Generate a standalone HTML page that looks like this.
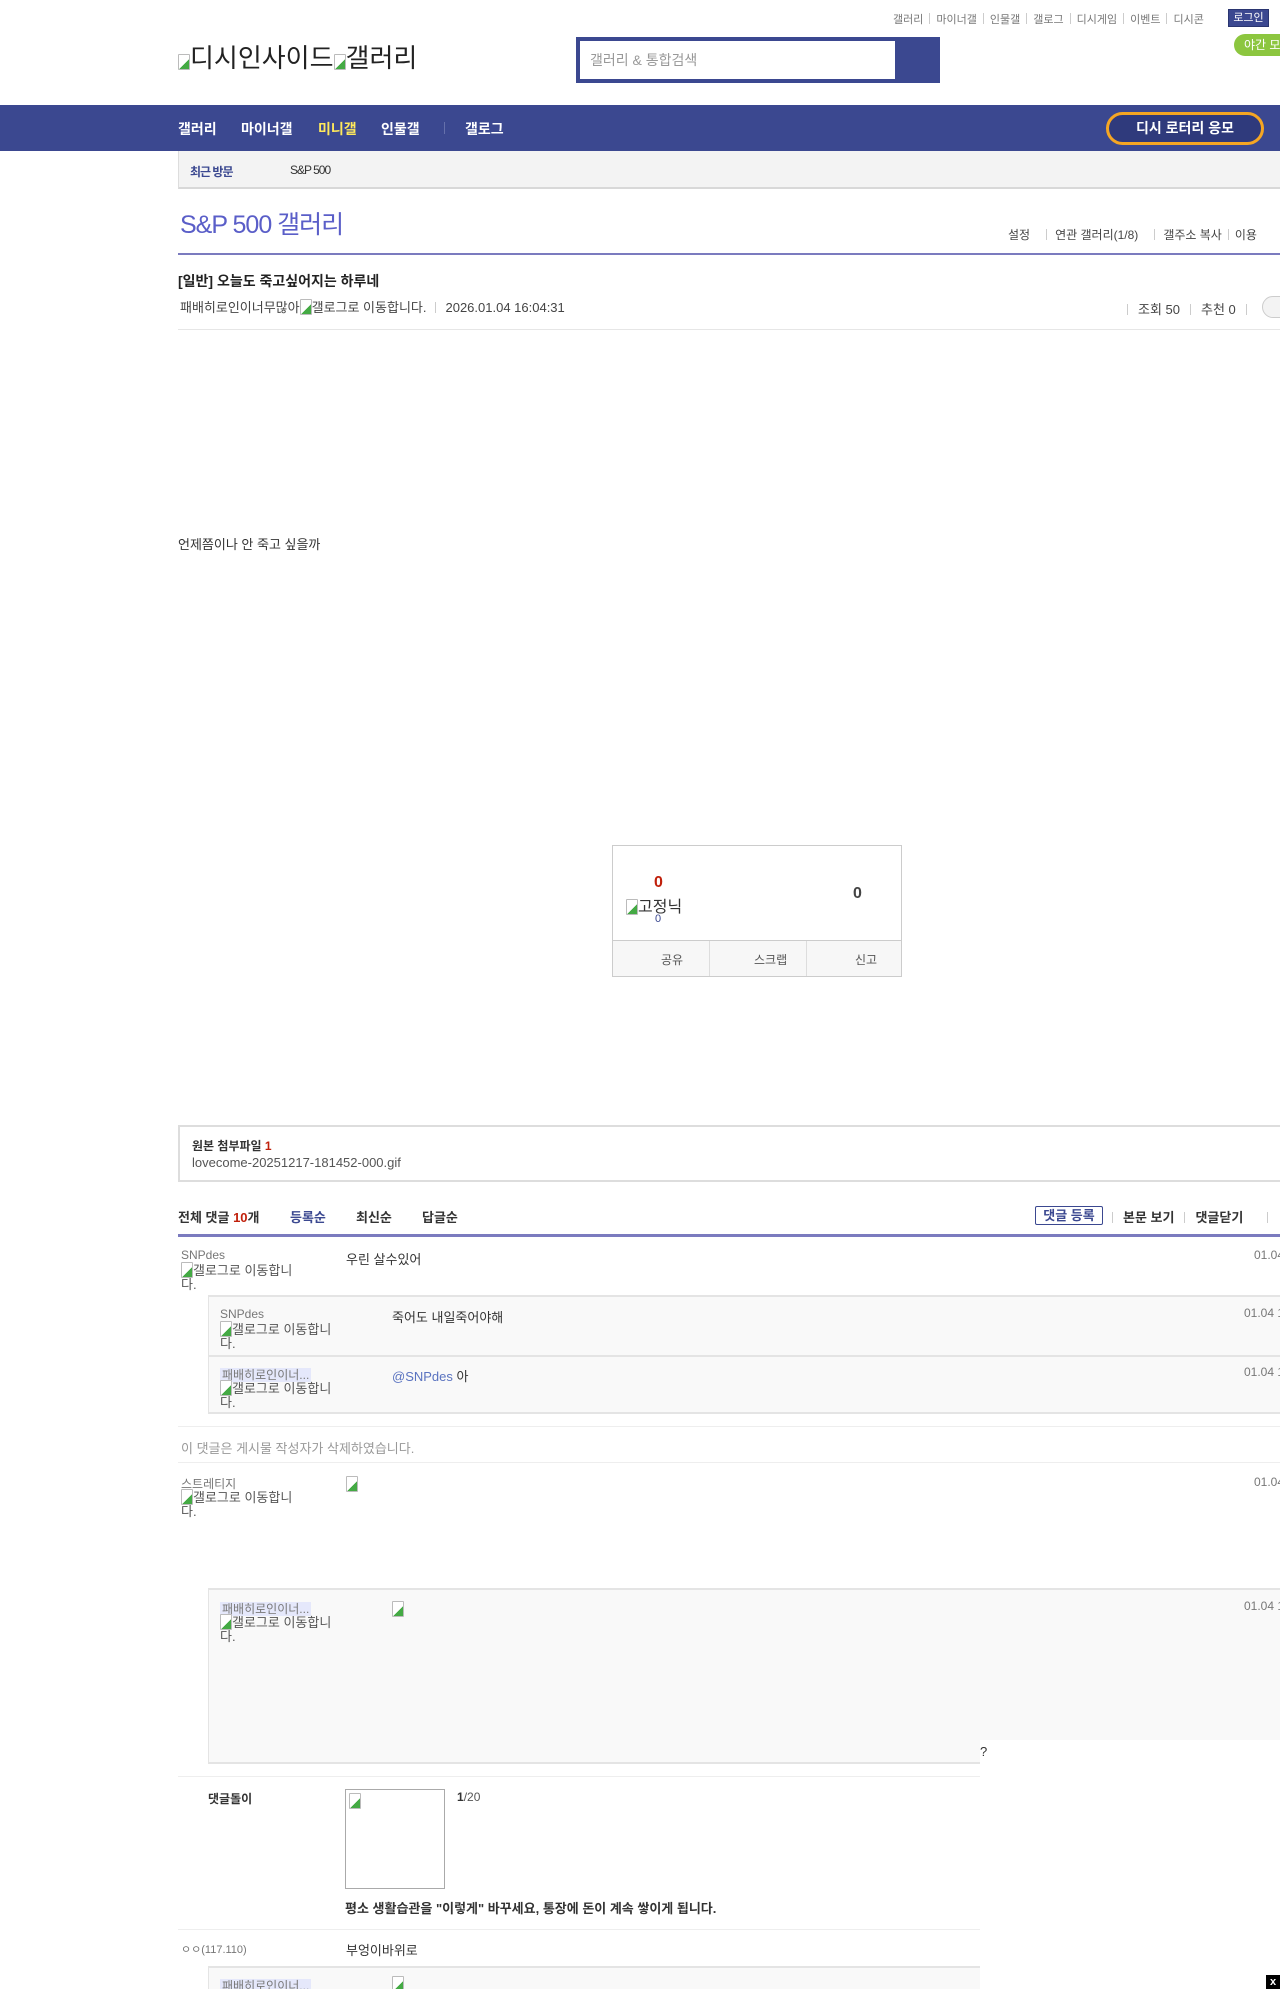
<!DOCTYPE html>
<html><head><meta charset="utf-8"><style>
*{margin:0;padding:0;box-sizing:border-box}
html,body{width:1280px;height:1989px;overflow:hidden;background:#fff}
body{position:relative;font-family:"Liberation Sans","Noto Sans CJK KR",sans-serif;font-size:12px;color:#333}
.a{position:absolute;white-space:nowrap}
.g{color:#777}
.sep{display:inline-block;width:1px;height:11px;background:#ccc;margin:0 6px;vertical-align:-1px}
.brk{display:inline-block;width:12px;height:16px;border:1px solid #bbb;border-radius:1px;vertical-align:-3px;background:linear-gradient(135deg,#fff 60%,#4a4 60%)}
.gallog{font-size:13px;color:#555;line-height:14px;white-space:normal;width:125px}
.rbox{position:absolute;left:208px;background:#f9f9f9;border-top:2px solid #e4e4e4;border-bottom:2px solid #e4e4e4;border-left:1px solid #e4e4e4}
.hl{background:#e5e8fb;color:#777;padding:0 2px}
</style></head><body>
<!-- top links -->
<div class="a g" style="left:893px;top:11px;font-size:11px">갤러리<span class="sep"></span>마이너갤<span class="sep"></span>인물갤<span class="sep"></span>갤로그<span class="sep"></span>디시게임<span class="sep"></span>이벤트<span class="sep"></span>디시콘</div>
<div class="a" style="left:1228px;top:9px;width:41px;height:18px;background:#3b4890;border:1px solid #2a3570;color:#fff;font-size:11px;text-align:center;line-height:16px">로그인</div>
<div class="a" style="left:1234px;top:34px;width:60px;height:22px;background:#8cc63f;border-radius:11px;color:#fff;font-size:12px;line-height:22px;padding-left:10px">야간 모드</div>
<div class="a" style="left:178px;top:38px;font-size:26px;color:#222"><span class="brk"></span>디시인사이드<span class="brk"></span>갤러리</div>
<div class="a" style="left:576px;top:37px;width:364px;height:46px;background:#3b4890"></div>
<div class="a" style="left:580px;top:41px;width:315px;height:38px;background:#fff;color:#999;font-size:14px;line-height:38px;padding-left:10px">갤러리 &amp; 통합검색</div>
<!-- nav -->
<div class="a" style="left:0;top:105px;width:1280px;height:46px;background:#3b4890"></div>
<div class="a" style="left:178px;top:119px;font-size:14px;font-weight:bold;color:#fff">갤러리</div>
<div class="a" style="left:241px;top:119px;font-size:14px;font-weight:bold;color:#fff">마이너갤</div>
<div class="a" style="left:318px;top:119px;font-size:14px;font-weight:bold;color:#ffe95b">미니갤</div>
<div class="a" style="left:381px;top:119px;font-size:14px;font-weight:bold;color:#fff">인물갤</div>
<div class="a" style="left:444px;top:122px;width:1px;height:12px;background:#6570ab"></div>
<div class="a" style="left:465px;top:119px;font-size:14px;font-weight:bold;color:#fff">갤로그</div>
<div class="a" style="left:1106px;top:112px;width:158px;height:33px;border:3px solid #f5a623;border-radius:17px;background:#2f3a7c;color:#fff;font-size:14px;font-weight:bold;text-align:center;line-height:27px">디시 로터리 응모</div>
<!-- recent -->
<div class="a" style="left:178px;top:151px;width:1110px;height:38px;background:#f3f3f3;border-left:1px solid #ddd;border-bottom:2px solid #d8d8d8"></div>
<div class="a" style="left:190px;top:163px;font-size:12px;font-weight:bold;color:#3b4890;letter-spacing:-1px">최근 방문</div>
<div class="a" style="left:290px;top:163px;font-size:12px;color:#333;letter-spacing:-1px">S&amp;P 500</div>
<!-- title -->
<div class="a" style="left:180px;top:205px;font-size:25px;color:#5a5ec8;letter-spacing:-1px">S&amp;P 500 갤러리</div>
<div class="a" style="left:1008px;top:226px;font-size:12px;color:#444">설정<span class="sep" style="margin:0 8px 0 16px"></span>연관 갤러리(1/8)<span class="sep" style="margin:0 8px 0 16px"></span>갤주소 복사<span class="sep"></span>이용</div>
<div class="a" style="left:178px;top:253px;width:1102px;height:2px;background:#7b7bbf"></div>
<div class="a" style="left:178px;top:271px;font-size:14px;font-weight:bold;color:#222">[일반] 오늘도 죽고싶어지는 하루네</div>
<div class="a" style="left:180px;top:297px;font-size:13px;color:#444">패배히로인이너무많아<span class="brk"></span>갤로그로 이동합니다.<span class="sep" style="margin:0 9px"></span>2026.01.04 16:04:31</div>
<div class="a" style="left:1127px;top:299px;font-size:13px;color:#444"><span class="sep" style="margin:0 10px 0 0"></span>조회 50<span class="sep" style="margin:0 10px"></span>추천 0<span class="sep" style="margin:0 10px"></span></div>
<div class="a" style="left:1262px;top:296px;width:40px;height:22px;border:1px solid #ccc;border-radius:11px;background:#f3f3f3"></div>
<div class="a" style="left:178px;top:329px;width:1102px;height:1px;background:#e6e6e6"></div>
<div class="a" style="left:178px;top:534px;font-size:13px;color:#333">언제쯤이나 안 죽고 싶을까</div>
<!-- recommend box -->
<div class="a" style="left:612px;top:845px;width:290px;height:132px;border:1px solid #ccc"></div>
<div class="a" style="left:613px;top:940px;width:288px;height:36px;background:#f7f7f7;border-top:1px solid #ccc"></div>
<div class="a" style="left:709px;top:941px;width:1px;height:35px;background:#ddd"></div>
<div class="a" style="left:806px;top:941px;width:1px;height:35px;background:#ddd"></div>
<div class="a" style="left:654px;top:874px;font-size:16px;font-weight:bold;color:#c0200b">0</div>
<div class="a" style="left:626px;top:893px;font-size:16px;color:#333"><span class="brk"></span>고정닉</div>
<div class="a" style="left:655px;top:913px;font-size:11px;color:#3b4890">0</div>
<div class="a" style="left:853px;top:885px;font-size:16px;font-weight:bold;color:#444">0</div>
<div class="a" style="left:661px;top:951px;font-size:12px;color:#555">공유</div>
<div class="a" style="left:754px;top:951px;font-size:12px;color:#555">스크랩</div>
<div class="a" style="left:855px;top:951px;font-size:12px;color:#555">신고</div>
<!-- attach -->
<div class="a" style="left:178px;top:1125px;width:1110px;height:57px;border:2px solid #ddd;border-right:none;border-top-width:2px"></div>
<div class="a" style="left:192px;top:1137px;font-size:12px;font-weight:bold;color:#333">원본 첨부파일 <span style="color:#c0200b">1</span></div>
<div class="a" style="left:192px;top:1155px;font-size:13px;color:#555">lovecome-20251217-181452-000.gif</div>
<!-- comment header -->
<div class="a" style="left:178px;top:1207px;font-size:13px;font-weight:bold;color:#333">전체 댓글 <span style="color:#c0200b">10</span>개</div>
<div class="a" style="left:290px;top:1207px;font-size:13px;font-weight:bold;color:#3b4890">등록순</div>
<div class="a" style="left:356px;top:1207px;font-size:13px;font-weight:bold;color:#333">최신순</div>
<div class="a" style="left:422px;top:1207px;font-size:13px;font-weight:bold;color:#333">답글순</div>
<div class="a" style="left:1035px;top:1206px;width:68px;height:19px;border:1px solid #3b4890;border-radius:2px;font-size:13px;font-weight:bold;color:#3b4890;text-align:center;line-height:17px">댓글 등록</div>
<div class="a" style="left:1112px;top:1207px;font-size:13px;font-weight:bold;color:#333"><span class="sep" style="margin:0 10px 0 0"></span>본문 보기<span class="sep" style="margin:0 10px"></span>댓글닫기<span class="sep" style="margin:0 0 0 24px"></span></div>
<div class="a" style="left:178px;top:1234px;width:1102px;height:3px;background:#7b7bbf"></div>
<!-- comment 1 -->
<div class="a" style="left:181px;top:1248px;font-size:12px;color:#777">SNPdes</div>
<div class="a gallog" style="left:181px;top:1262px"><span class="brk"></span>갤로그로 이동합니다.</div>
<div class="a" style="left:346px;top:1249px;font-size:13px;color:#333">우린 살수있어</div>
<div class="a g" style="left:1254px;top:1248px">01.04 16:05:1</div>
<div class="rbox" style="top:1295px;width:1080px;height:119px"></div>
<div class="a" style="left:208px;top:1355px;width:1080px;height:2px;background:#e4e4e4"></div>
<div class="a" style="left:220px;top:1307px;font-size:12px;color:#777">SNPdes</div>
<div class="a gallog" style="left:220px;top:1321px"><span class="brk"></span>갤로그로 이동합니다.</div>
<div class="a" style="left:392px;top:1307px;font-size:13px;color:#333">죽어도 내일죽어야해</div>
<div class="a g" style="left:1244px;top:1306px">01.04 16:05:</div>
<div class="a" style="left:220px;top:1366px;font-size:12px"><span class="hl">패배히로인이너...</span></div>
<div class="a gallog" style="left:220px;top:1380px"><span class="brk"></span>갤로그로 이동합니다.</div>
<div class="a" style="left:392px;top:1366px;font-size:13px;color:#333"><span style="color:#5a73c0">@SNPdes</span> 아</div>
<div class="a g" style="left:1244px;top:1365px">01.04 16:06:</div>
<div class="a" style="left:178px;top:1426px;width:1102px;height:1px;background:#eee"></div>
<div class="a" style="left:181px;top:1438px;font-size:13px;color:#999">이 댓글은 게시물 작성자가 삭제하였습니다.</div>
<div class="a" style="left:178px;top:1462px;width:1102px;height:1px;background:#eee"></div>
<!-- comment 3 -->
<div class="a" style="left:181px;top:1475px;font-size:12px;color:#777">스트레티지</div>
<div class="a gallog" style="left:181px;top:1489px"><span class="brk"></span>갤로그로 이동합니다.</div>
<div class="a" style="left:346px;top:1476px"><span class="brk"></span></div>
<div class="a g" style="left:1254px;top:1475px">01.04 16:07:</div>
<div class="rbox" style="top:1588px;width:1080px;height:176px"></div>
<div class="a" style="left:980px;top:1740px;width:300px;height:26px;background:#fff"></div>
<div class="a" style="left:980px;top:1744px;font-size:13px;color:#333">?</div>
<div class="a" style="left:220px;top:1600px;font-size:12px"><span class="hl">패배히로인이너...</span></div>
<div class="a gallog" style="left:220px;top:1614px"><span class="brk"></span>갤로그로 이동합니다.</div>
<div class="a" style="left:392px;top:1601px"><span class="brk"></span></div>
<div class="a g" style="left:1244px;top:1599px">01.04 16:08:</div>
<div class="a" style="left:178px;top:1776px;width:802px;height:1px;background:#eee"></div>
<!-- bot -->
<div class="a" style="left:208px;top:1790px;font-size:12px;font-weight:bold;color:#333">댓글돌이</div>
<div class="a" style="left:345px;top:1789px;width:100px;height:100px;border:1px solid #aaa"><span class="brk" style="margin:3px"></span></div>
<div class="a" style="left:457px;top:1790px;font-size:12px;color:#555"><b style="color:#333">1</b>/20</div>
<div class="a" style="left:345px;top:1898px;font-size:13px;font-weight:bold;color:#333">평소 생활습관을 "이렇게" 바꾸세요, 통장에 돈이 계속 쌓이게 됩니다.</div>
<div class="a" style="left:178px;top:1929px;width:802px;height:1px;background:#eee"></div>
<div class="a" style="left:181px;top:1941px;font-size:11px;color:#777">ㅇㅇ(117.110)</div>
<div class="a" style="left:346px;top:1940px;font-size:13px;color:#333">부엉이바위로</div>
<div class="rbox" style="top:1966px;width:772px;height:30px;border-bottom:none"></div>
<div class="a" style="left:220px;top:1977px;font-size:12px"><span class="hl">패배히로인이너...</span></div>
<div class="a" style="left:392px;top:1976px"><span class="brk"></span></div>
<div class="a" style="left:1266px;top:1975px;width:14px;height:14px;background:#000;color:#fff;font-size:11px;font-weight:bold;text-align:center;line-height:14px">x</div>
</body></html>
